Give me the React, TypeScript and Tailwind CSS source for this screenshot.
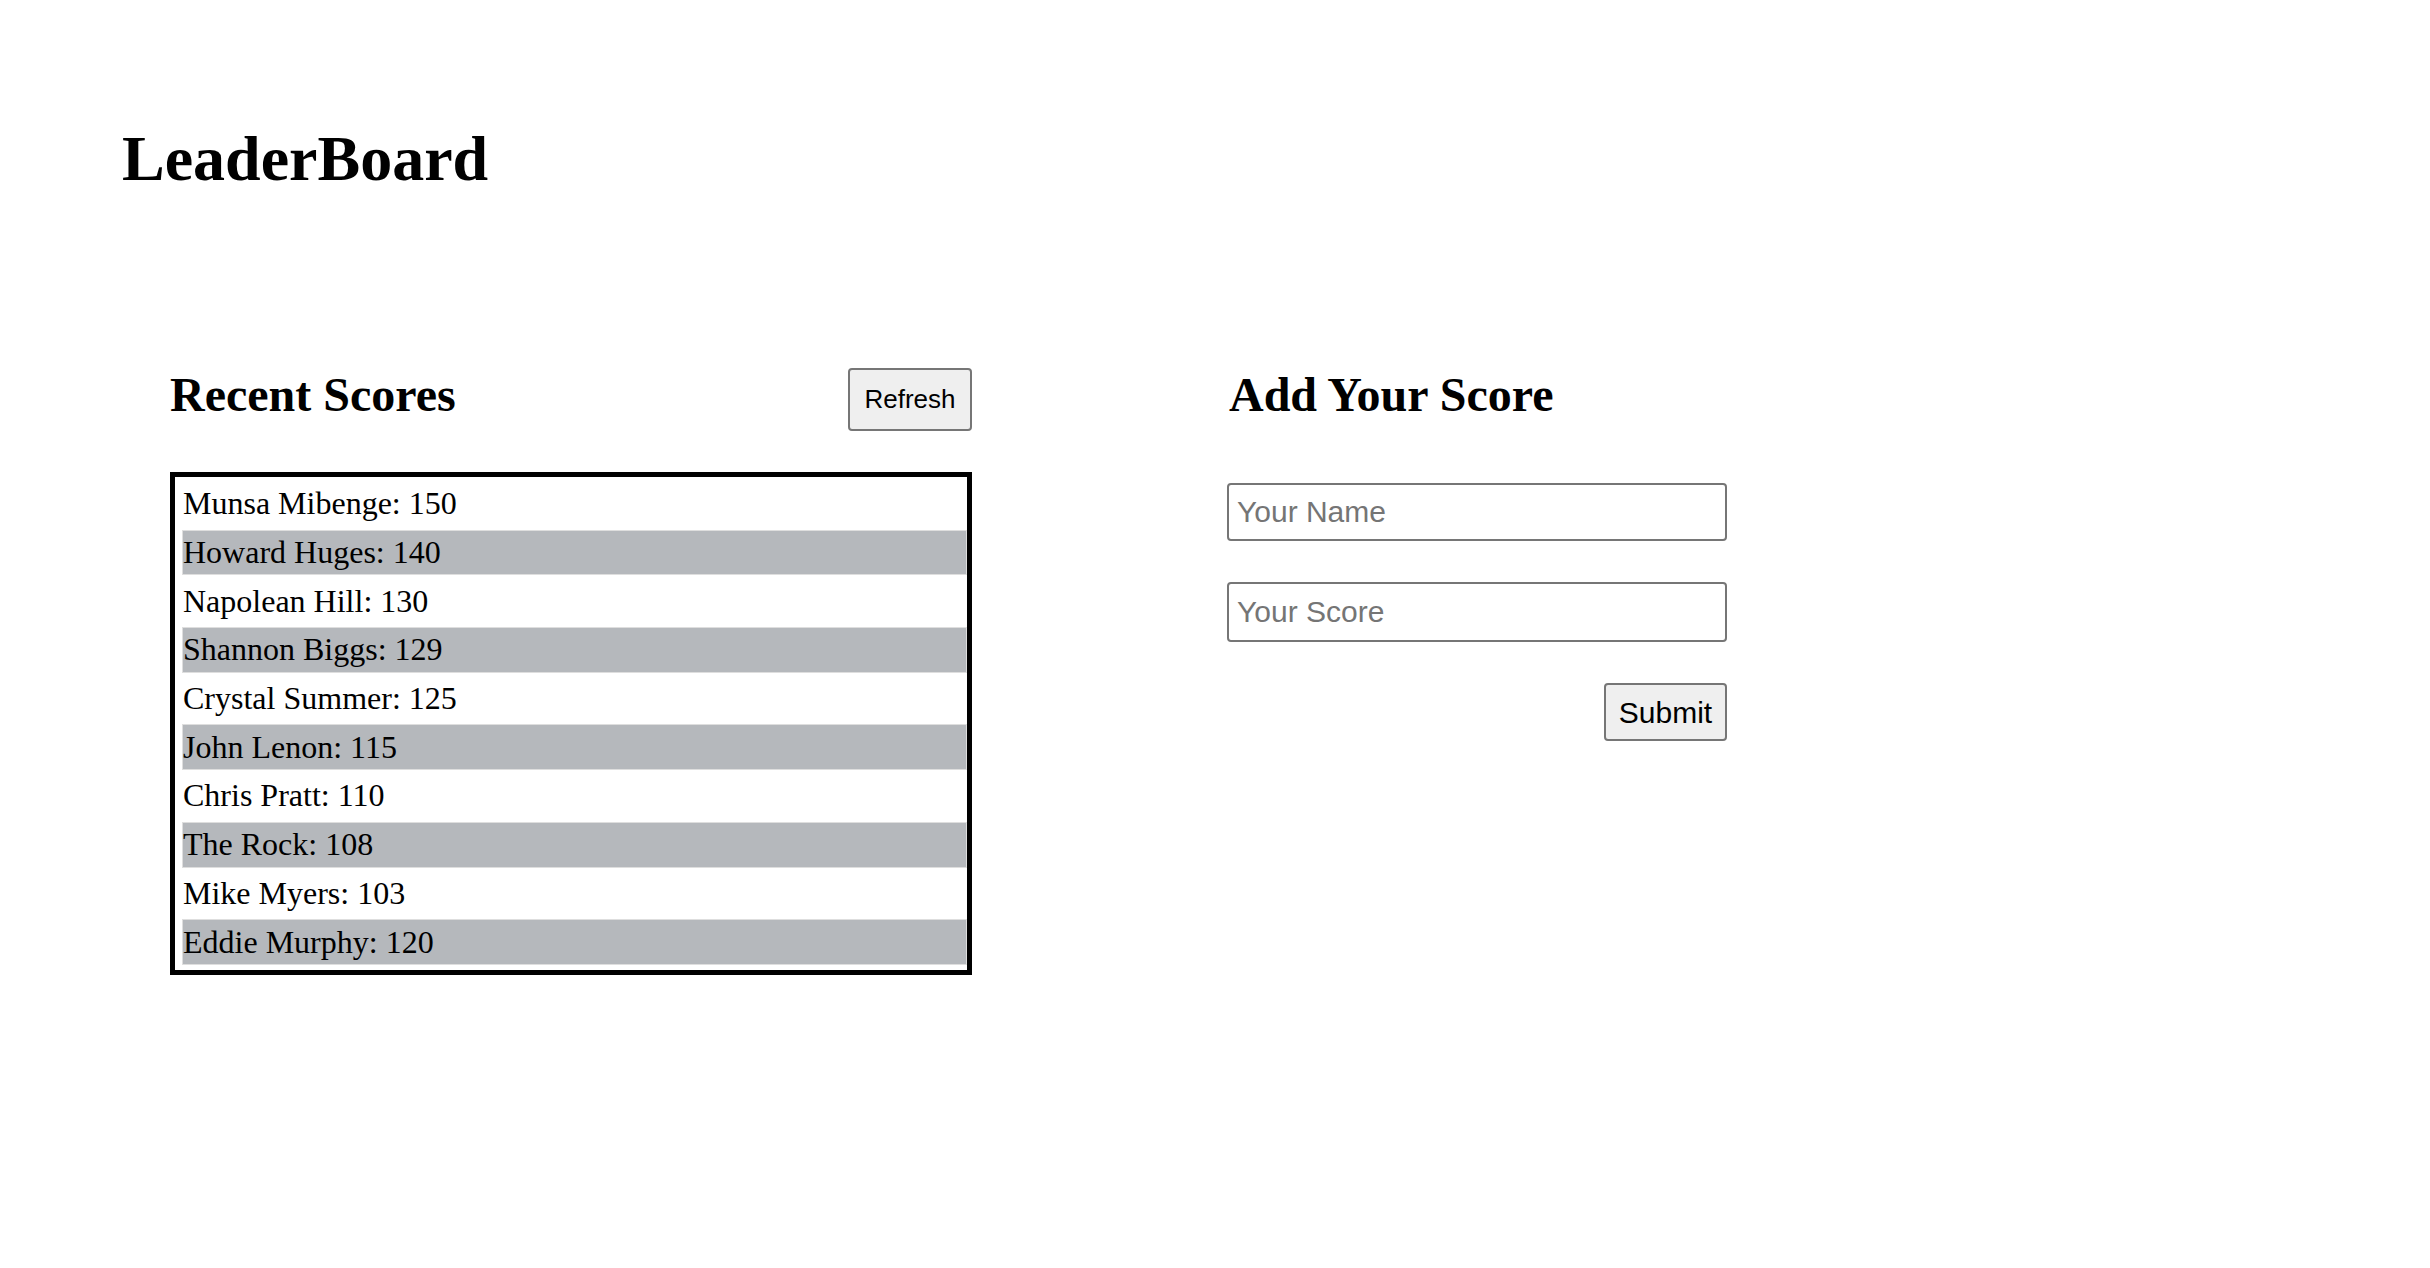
import { useState } from "react";

const SCORES = [
  { name: "Munsa Mibenge", score: 150 },
  { name: "Howard Huges", score: 140 },
  { name: "Napolean Hill", score: 130 },
  { name: "Shannon Biggs", score: 129 },
  { name: "Crystal Summer", score: 125 },
  { name: "John Lenon", score: 115 },
  { name: "Chris Pratt", score: 110 },
  { name: "The Rock", score: 108 },
  { name: "Mike Myers", score: 103 },
  { name: "Eddie Murphy", score: 120 },
];

export default function App() {
  const [name, setName] = useState("");
  const [score, setScore] = useState("");

  return (
    <div className="min-h-screen bg-white pt-[122px] pl-[122px] text-black font-['Liberation_Serif','Times_New_Roman',serif]">
      <h1 className="text-[64px] leading-[74px] font-bold">LeaderBoard</h1>

      <main className="mt-[171px] ml-[48px] flex gap-[255px]">
        <section className="w-[802px]">
          <div className="flex justify-between items-start">
            <h2 className="text-[48px] leading-[56px] font-bold">Recent Scores</h2>
            <button
              type="button"
              className="mt-px h-[63px] w-[124px] rounded-[4px] border-2 border-[#767676] bg-[#efefef] text-[26px] font-['Liberation_Sans',Arial,sans-serif] text-black"
            >
              Refresh
            </button>
          </div>

          <ul className="mt-[41px] border-[5px] border-black pl-[7px] pt-[4px] pb-[5px]">
            {SCORES.map((s, i) => (
              <li
                key={s.name}
                className={`h-[45.7px] flex items-center border border-[#dedede] text-[32px] leading-[37px] mb-[3px] last:mb-0 ${
                  i % 2 === 1 ? "bg-[#b5b8bc]" : "bg-white border-white"
                }`}
              >
                {s.name}: {s.score}
              </li>
            ))}
          </ul>
        </section>

        <section className="w-[500px]">
          <h2 className="text-[48px] leading-[56px] font-bold pl-[2px]">Add Your Score</h2>
          <form className="mt-[60px] flex flex-col" onSubmit={(e) => e.preventDefault()}>
            <input
              value={name}
              onChange={(e) => setName(e.target.value)}
              placeholder="Your Name"
              className="h-[58px] w-full rounded-[4px] border-2 border-[#767676] px-[8px] text-[30px] font-['Liberation_Sans',Arial,sans-serif] placeholder:text-[#757575] outline-none"
            />
            <input
              value={score}
              onChange={(e) => setScore(e.target.value)}
              placeholder="Your Score"
              className="mt-[41px] h-[60px] w-full rounded-[4px] border-2 border-[#767676] px-[8px] text-[30px] font-['Liberation_Sans',Arial,sans-serif] placeholder:text-[#757575] outline-none"
            />
            <div className="mt-[41px] flex justify-end">
              <button
                type="submit"
                className="h-[58px] w-[123px] rounded-[4px] border-2 border-[#767676] bg-[#efefef] text-[30px] font-['Liberation_Sans',Arial,sans-serif] text-black"
              >
                Submit
              </button>
            </div>
          </form>
        </section>
      </main>
    </div>
  );
}
